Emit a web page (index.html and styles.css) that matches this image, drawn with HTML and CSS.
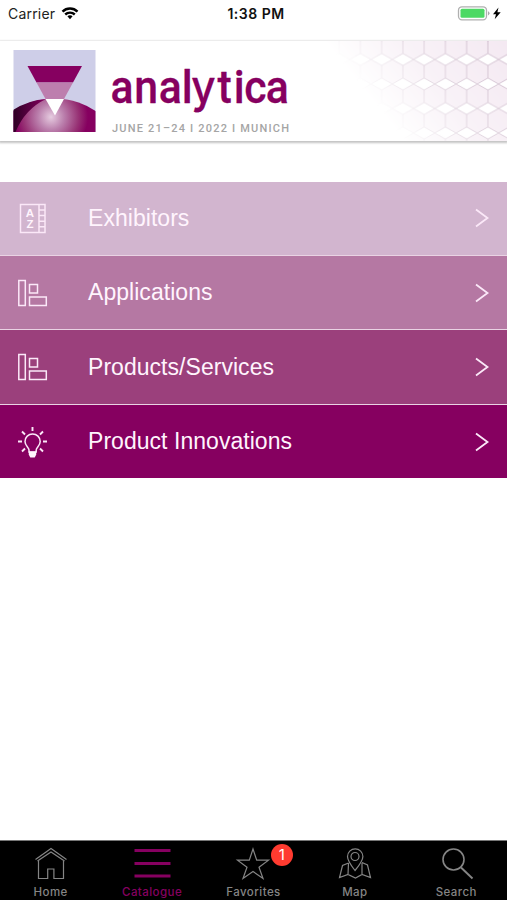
FILE: index.html
```html
<!DOCTYPE html>
<html lang="en">
<head>
	<meta charset="utf-8">
	<title>analytica</title>
	<link rel="stylesheet" href="styles.css">
</head>
<body>
	<div class="app">
		<header class="status">
			<div class="carrier">
				<span>Carrier</span>
				<svg width="18" height="13" viewBox="0 0 17 13" fill="none" stroke="#000" stroke-width="2.4">
					<path d="M1 4.600C5.200.5 11.800.5 16 4.600"/>
					<path d="M3.700 7.500c2.700-2.500 6.900-2.500 9.600 0"/>
					<path d="M5.900 9.300L8.500 12.300l2.600-3c-1.500-1.300-3.700-1.300-5.200 0z" fill="#000" stroke="none"/>
				</svg>
			</div>
			<div class="time">1:38 PM</div>
			<div class="power">
				<svg width="45" height="15" viewBox="0 0 45 15">
					<rect x="1.500" y=".8" width="28" height="13" rx="3.500" fill="#fff" stroke="#b0b0b0" stroke-width="1.300"/>
					<rect x="3.500" y="2.800" width="24" height="9" rx="1.500" fill="#4cd964"/>
					<path d="M31 5.200v4.200q1.500-.7 1.500-2.100t-1.500-2.100z" fill="#aaa"/>
					<path d="M41.500 1.500l-5.500 6.800h3l-1.300 5 6-7.100h-3.300z" fill="#000"/>
				</svg>
			</div>
		</header>

		<div class="banner">
			<svg width="507" height="100" viewBox="0 0 507 100">
				<defs>
					<pattern id="hex" width="21.250" height="24.500" patternUnits="userSpaceOnUse" x="360.400" y="18.500">
						<path d="M10.625 0L21.250 6v12.500l-10.625 6L0 18.500V6z" fill="#f4e9f2" stroke="#c4aec2" stroke-width=".8"/>
					</pattern>
					<linearGradient id="fade" gradientUnits="userSpaceOnUse" x1="372" y1="60" x2="482" y2="-28">
						<stop offset="0" stop-color="#000"/>
						<stop offset=".45" stop-color="#999"/>
						<stop offset="1" stop-color="#fff"/>
					</linearGradient>
					<mask id="fadeMask" maskUnits="userSpaceOnUse" x="300" y="0" width="207" height="100">
						<rect x="300" width="207" height="100" fill="url(#fade)"/>
					</mask>
					<radialGradient id="globe" gradientUnits="userSpaceOnUse" cx="51" cy="76" r="37">
						<stop offset="0" stop-color="#e6cce0"/>
						<stop offset=".35" stop-color="#bb80ad"/>
						<stop offset=".75" stop-color="#973174"/>
						<stop offset="1" stop-color="#860060"/>
					</radialGradient>
					<linearGradient id="shade" x1="0" x2="1">
						<stop offset="0" stop-color="#2d0024"/>
						<stop offset="1" stop-color="#860060"/>
					</linearGradient>
					<clipPath id="frame"><rect x="13.500" y="9" width="82" height="82"/></clipPath>
				</defs>
				<rect x="300" width="207" height="100" fill="url(#hex)" mask="url(#fadeMask)"/>
				<g clip-path="url(#frame)">
					<rect x="13" y="9" width="83" height="82" fill="#cecee8"/>
					<ellipse cx="54.500" cy="109" rx="63" ry="51.500" fill="url(#globe)"/>
					<path d="M13 69Q29 59 46 58Q25 68 15.500 91H13z" fill="url(#shade)"/>
					<path d="M27.500 25h54.500l-9 16.500H36.500z" fill="#860060"/>
					<path d="M36.500 41.500H73L64 58H45.500z" fill="#bd7eae"/>
					<path d="M45.500 58H64L55 74.500z" fill="#fff"/>
				</g>
				<text class="wordmark" transform="scale(.92 1)" x="120 146 172.500 197.500 208 236.500 254 265.500 289" y="62">anal<tspan class="wide">y</tspan>tica</text>
				<text class="date" x="112" y="91" textLength="177">JUNE 21–24 I 2022 I MUNICH</text>
			</svg>
		</div>

		<nav class="menu">
			<a class="item exhibitors">
				<svg class="icon" width="32" height="32" viewBox="0 0 32 32">
					<path d="M4.500 2.500H29v28H4.500zM23 2.500v28M23 8h6M23 13.600h6M23 19.200h6M23 24.800h6"/>
					<text class="az" x="14" y="14.600">A</text>
					<text class="az" x="14" y="25.600">Z</text>
				</svg>
				<span>Exhibitors</span>
				<svg class="arrow" width="16" height="20" viewBox="0 0 16 20"><path d="M2 1.500L13.500 10 2 18.500"/></svg>
			</a>
			<a class="item applications">
				<svg class="icon" width="32" height="32" viewBox="0 0 32 32">
					<path d="M2.800 3.500H9.300v25H2.800zM13.500 7.500h8v8.500h-8zM13.500 20H30.300v8.500H13.500z"/>
				</svg>
				<span>Applications</span>
				<svg class="arrow" width="16" height="20" viewBox="0 0 16 20"><path d="M2 1.500L13.500 10 2 18.500"/></svg>
			</a>
			<a class="item products">
				<svg class="icon" width="32" height="32" viewBox="0 0 32 32">
					<path d="M2.800 3.500H9.300v25H2.800zM13.500 7.500h8v8.500h-8zM13.500 20H30.300v8.500H13.500z"/>
				</svg>
				<span>Products/Services</span>
				<svg class="arrow" width="16" height="20" viewBox="0 0 16 20"><path d="M2 1.500L13.500 10 2 18.500"/></svg>
			</a>
			<a class="item innovations">
				<svg class="icon" width="32" height="32" viewBox="0 0 32 32">
					<path d="M13 26v-2c0-2.500-4-4-4-8.500a7.600 7.600 0 0 1 15.200 0c0 4.500-4 6-4 8.500v2z"/>
					<path d="M12.800 25.500h7.400v3.200l-1.500 2.800h-4.400l-1.500-2.800z" class="solid"/>
					<path d="M16.500 1v4M2 15.500h4M27 15.500h4M6 5.500l3 3M27 5.500l-3 3M6 25.500l3-3M27 25.500l-3-3" stroke-width="1.900"/>
				</svg>
				<span>Product Innovations</span>
				<svg class="arrow" width="16" height="20" viewBox="0 0 16 20"><path d="M2 1.500L13.500 10 2 18.500"/></svg>
			</a>
		</nav>

		<footer class="tabs">
			<a class="tab">
				<svg width="36" height="34" viewBox="0 0 36 34">
					<path d="M2.500 12.500L18 1.500l15.500 11M4.500 14L18 5l13.500 9M5.500 14v17.500h9.200V22h6.200v9.500h9.600V14"/>
				</svg>
				<span>Home</span>
			</a>
			<a class="tab active">
				<svg width="37" height="34" viewBox="0 0 37 34"><path d="M.5 3.500h36M.5 16.500h36M.5 29h36" stroke-width="3.200"/></svg>
				<span>Catalogue</span>
			</a>
			<a class="tab">
				<svg width="36" height="34" viewBox="0 0 36 34">
					<path d="M18 2l3.700 11.200H33.500L24 20.200 28 31.500 18 24.500 8 31.500l4-11.300-9.500-7h11.800z"/>
				</svg>
				<b class="badge">1</b>
				<span>Favorites</span>
			</a>
			<a class="tab">
				<svg width="36" height="34" viewBox="0 0 36 34">
					<path d="M18 23.500Q10.500 14 10.500 9.500a7.700 7.700 0 0 1 15.400 0Q25.900 14 18 23.500z"/>
					<circle cx="18" cy="9.500" r="4"/>
					<path d="M11.500 16L5.500 18.500 2.500 30.500l8.500-3 7.500 3.500 6.500-3.500 8.500 3-3-12.500L25 15.500M11.500 16L11 27.500M25 16v11.500"/>
				</svg>
				<span>Map</span>
			</a>
			<a class="tab">
				<svg width="36" height="34" viewBox="0 0 36 34">
					<circle cx="15.500" cy="12.500" r="10.500" stroke-width="1.600"/>
					<path d="M23 20.500L34.500 31.500" stroke-width="1.900"/>
				</svg>
				<span>Search</span>
			</a>
		</footer>
	</div>
</body>
</html>
```
FILE: styles.css
```css
body {
	margin: 0;
	background: #fff;
	font-family: Inter, sans-serif;
}

.app {
	display: flex;
	flex-direction: column;
	width: 507px;
	height: 900px;
	overflow: hidden;
}

/* status bar */
.status {
	display: grid;
	grid-template-columns: 1fr auto 1fr;
	align-items: center;
	box-sizing: border-box;
	height: 41px;
	padding: 0 5px 15px 8px;
	font-size: 14px;
	color: #222;
}

.carrier {
	display: flex;
	align-items: center;
	gap: 6px;
	letter-spacing: 0.2px;
}

.time {
	font-weight: 600;
	letter-spacing: 0.5px;
	padding-left: 2px;
	color: #111;
}

.power {
	display: flex;
	justify-content: flex-end;
}

/* banner */
.banner {
	height: 100px;
	box-shadow: 0 1px 2px 1px #c4c4c4;
}

.banner svg, .tab svg {
	display: block;
}

.wordmark {
	font-family: Roboto, sans-serif;
	font-weight: 500;
	font-size: 46.500px;
	fill: #860060;
	stroke: #860060;
	stroke-width: 0.300;
	stroke-linejoin: round;
}

.wide {
	font-family: Inter, sans-serif;
	font-size: 46px;
}

.date {
	font-family: Roboto, sans-serif;
	font-size: 11px;
	font-weight: 500;
	fill: #a5a5a5;
}

/* catalogue menu */
.menu {
	margin-top: 40.500px;
	background: #ead3e4;
}

.item {
	display: grid;
	grid-template-columns: 72px 1fr 16px;
	align-items: center;
	box-sizing: border-box;
	height: 73.200px;
	margin-bottom: 1.300px;
	padding: 0 17px 0 16px;
	font-family: "Liberation Sans", sans-serif;
	font-size: 23px;
	letter-spacing: 0.040px;
	color: #fff4fd;
}

.item:last-child {
	margin-bottom: 0;
}

.exhibitors { background: #d2b5cf; }
.applications { background: #b578a3; }
.products { background: #9b407c; }
.innovations { background: #860060; }

.icon, .arrow {
	fill: none;
	stroke: #fbe8f8;
	stroke-width: 1.500;
}

.arrow {
	stroke-width: 1.800;
}

.icon .solid {
	fill: #fff4fd;
	stroke: none;
}

.az {
	font-family: "Liberation Sans", sans-serif;
	font-size: 11.500px;
	font-weight: bold;
	text-anchor: middle;
	fill: #fff4fd;
	stroke: none;
}

/* tab bar */
.tabs {
	display: grid;
	grid-template-columns: repeat(5, 1fr);
	box-sizing: border-box;
	height: 60px;
	margin-top: auto;
	padding-top: 6px;
	border-top: 1px solid #777;
	background: #000;
}

.tab {
	position: relative;
	display: flex;
	flex-direction: column;
	align-items: center;
	font-size: 11.500px;
	font-weight: 500;
	letter-spacing: 0.450px;
	line-height: 14px;
	color: #858585;
}

.tab span {
	margin-top: 4px;
}

.tab svg {
	fill: none;
	stroke: #858585;
	stroke-width: 1.200;
}

.active {
	color: #860060;
}

.active svg {
	stroke: #860060;
}

.badge {
	position: absolute;
	top: -3px;
	left: 68px;
	width: 22px;
	height: 22px;
	border-radius: 50%;
	background: #ff3b30;
	color: #fff;
	font-size: 15px;
	font-weight: 400;
	line-height: 22px;
	letter-spacing: 0;
	text-align: center;
}
```
